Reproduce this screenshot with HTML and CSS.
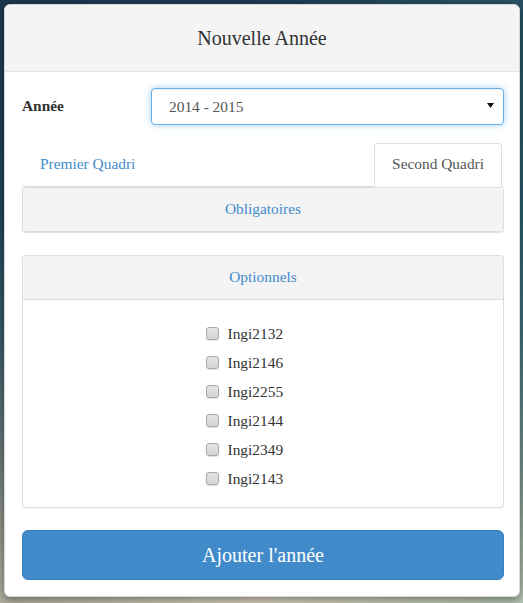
FILE: index.html
```html
<!DOCTYPE html>
<html lang="fr">
<head>
<meta charset="utf-8">
<title>Nouvelle Année</title>
<link rel="stylesheet" href="styles.css">
</head>
<body>
<div class="modal">
  <div class="modal-header">
    <h4 class="modal-title">Nouvelle Année</h4>
  </div>
  <div class="modal-body">
    <div class="form-row">
      <label class="form-label" for="annee">Année</label>
      <div class="select-wrap">
        <select id="annee" class="form-select">
          <option>2014 - 2015</option>
        </select>
        <svg class="select-arrow" width="7" height="5" viewBox="0 0 7 5" aria-hidden="true"><path d="M0 0h7L3.5 5z" fill="#111"/></svg>
      </div>
    </div>

    <ul class="nav-tabs">
      <li class="tab"><a href="#">Premier Quadri</a></li>
      <li class="tab active"><a href="#">Second Quadri</a></li>
    </ul>

    <div class="panel panel-collapsed">
      <div class="panel-heading"><a href="#">Obligatoires</a></div>
    </div>

    <div class="panel">
      <div class="panel-heading"><a href="#">Optionnels</a></div>
      <div class="panel-body">
        <div class="check-list">
          <label class="check"><input type="checkbox"><span>Ingi2132</span></label>
          <label class="check"><input type="checkbox"><span>Ingi2146</span></label>
          <label class="check"><input type="checkbox"><span>Ingi2255</span></label>
          <label class="check"><input type="checkbox"><span>Ingi2144</span></label>
          <label class="check"><input type="checkbox"><span>Ingi2349</span></label>
          <label class="check"><input type="checkbox"><span>Ingi2143</span></label>
        </div>
      </div>
    </div>

    <button class="btn-primary" type="button">Ajouter l'année</button>
  </div>
</div>
</body>
</html>
```

FILE: styles.css
```css
html, body {
  margin: 0;
  padding: 0;
  height: 100%;
}

body {
  font-family: "Liberation Serif", "Times New Roman", serif;
  font-size: 15.4px;
  color: #333;
  background:
    linear-gradient(to right, rgba(20, 40, 60, 0.2) 0%, rgba(20, 40, 60, 0) 50%, rgba(70, 150, 150, 0.25) 100%),
    linear-gradient(to bottom, #1d3a52 0%, #244a60 35%, #3f6472 55%, #7f8c86 76%, #b5b29c 90%, #d8d2ba 100%);
  overflow: hidden;
}

.modal {
  box-sizing: border-box;
  width: 516px;
  margin: 4px 0 0 4px;
  background: #fff;
  border: 1px solid #d6d6d6;
  border-radius: 6px;
  box-shadow: 0 3px 9px rgba(0, 0, 0, 0.4);
  overflow: hidden;
}

.modal-header {
  background: #f4f4f4;
  border-bottom: 1px solid #e2e2e2;
  height: 66px;
  display: flex;
  align-items: center;
  justify-content: center;
}

.modal-title {
  margin: 0 0 1px;
  font-size: 20px;
  font-weight: normal;
  color: #333;
  line-height: 26px;
}

.modal-body {
  padding: 16px 15px 16px 17px;
}

.form-row {
  display: grid;
  grid-template-columns: 129px 1fr;
  align-items: center;
}

.form-label {
  font-weight: bold;
  color: #333;
  margin-bottom: 1px;
}

.select-wrap {
  position: relative;
}

.form-select {
  box-sizing: border-box;
  display: block;
  width: 100%;
  height: 37px;
  padding: 0 30px 0 17px;
  font-family: inherit;
  font-size: 15.4px;
  color: #555;
  background: #fff;
  border: 1px solid #66afe9;
  border-radius: 4px;
  outline: none;
  appearance: none;
  -webkit-appearance: none;
  box-shadow: inset 0 1px 1px rgba(0, 0, 0, 0.075), 0 0 7px rgba(102, 175, 233, 0.6);
}

.select-arrow {
  position: absolute;
  right: 10px;
  top: 15px;
  pointer-events: none;
}

.nav-tabs {
  list-style: none;
  margin: 18px 0 0;
  padding: 0;
  display: flex;
  justify-content: space-between;
  border-bottom: 1px solid #ddd;
}

.tab {
  margin-bottom: -1px;
  margin-right: 2px;
}

.tab a {
  display: block;
  padding: 9px 17px 11px;
  line-height: 22px;
  border: 1px solid transparent;
  border-radius: 4px 4px 0 0;
  color: #428bca;
  text-decoration: none;
}

.tab.active a {
  color: #555;
  background: #fff;
  border-color: #ddd;
  border-bottom-color: transparent;
}

.panel {
  border: 1px solid #ddd;
  border-radius: 4px;
  background: #fff;
  box-shadow: 0 1px 1px rgba(0, 0, 0, 0.05);
  margin-bottom: 22px;
}

.panel-collapsed {
  margin-bottom: 23px;
  box-shadow: 0 1px 1px rgba(0, 0, 0, 0.12);
}

.panel-heading {
  background: #f4f4f4;
  padding: 9px 15px 11px;
  line-height: 23px;
  text-align: center;
  border-radius: 3px 3px 0 0;
}

.panel-collapsed .panel-heading {
  border-radius: 3px;
}

.panel-heading a {
  color: #428bca;
  text-decoration: none;
}

.panel-body {
  border-top: 1px solid #ddd;
  padding: 19px 15px 14px;
}

.check-list {
  width: 115px;
  margin: 0 auto;
  display: flex;
  flex-direction: column;
}

.check {
  height: 29px;
  display: flex;
  align-items: center;
  color: #333;
}

.check input {
  appearance: none;
  -webkit-appearance: none;
  box-sizing: border-box;
  width: 13px;
  height: 13px;
  margin: 0 9px 0 0;
  border: 1px solid #a9a9a9;
  border-radius: 3px;
  background: linear-gradient(to bottom, #e4e4e4, #d4d4d4);
  box-shadow: 0 1px 1px rgba(0, 0, 0, 0.12);
}

.btn-primary {
  display: block;
  box-sizing: border-box;
  width: 100%;
  height: 50px;
  padding: 0;
  font-family: inherit;
  font-size: 20px;
  color: #fff;
  background: #428bca;
  border: 1px solid #357ebd;
  border-radius: 6px;
  cursor: pointer;
}
```
